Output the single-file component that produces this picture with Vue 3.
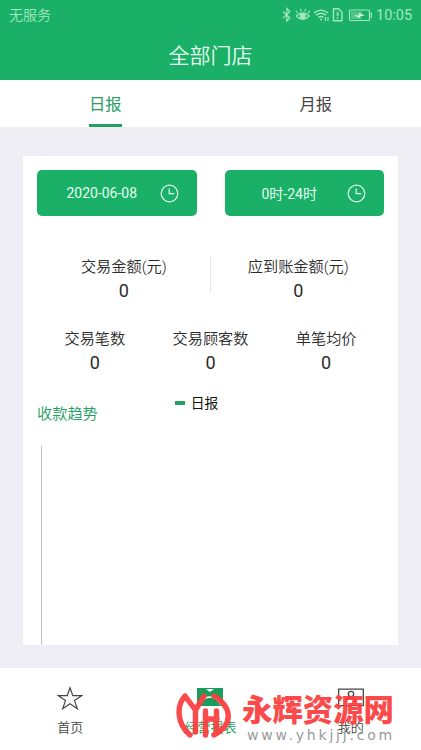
<script setup>
const tabs = ['日报', '月报']
const filters = ['2020-06-08', '0时-24时']
const totals = [
  { label: '交易金额(元)', value: 0 },
  { label: '应到账金额(元)', value: 0 },
]
const counts = [
  { label: '交易笔数', value: 0 },
  { label: '交易顾客数', value: 0 },
  { label: '单笔均价', value: 0 },
]
</script>

<template>
  <div class="screen">
    <header>
      <div class="status">
        <span>无服务</span>
        <div class="status-right">
          <svg class="indicators" width="90" height="16" viewBox="0 0 90 16" fill="none" stroke="currentColor" stroke-width="1.2">
            <path d="M1 4.5 8 11 4.8 14V1.5L8 4.5 1 11" />
            <path d="M14.2 9Q20.7 2.8 27.2 9 20.7 15.8 14.2 9M15.5 6 13.8 3.8M19 4.3 18.5 1.8M23 4.3 23.6 1.8M26 6 27.8 3.8" />
            <circle cx="20.7" cy="9" r="2.5" fill="currentColor" />
            <path d="M32 6Q39 .2 46 6M34 8.3Q39 4.2 44 8.3M36.3 10.5Q39 8.4 41.5 10.5" stroke-width="1.4" />
            <circle cx="39" cy="12.5" r="1" fill="currentColor" stroke="none" />
            <path d="M43.5 10v4M46 10v4" />
            <path d="M51.5 1.8h5l3.5 3.5v8.4h-8.5z" stroke-width="1.4" />
            <path d="M55.6 4.8v4.4M55.6 10.5V12" stroke-width="1.6" />
            <rect x="67.5" y="3" width="20" height="10.5" rx="1" />
            <rect x="69" y="4.5" width="11" height="7.5" fill="currentColor" stroke="none" opacity=".4" />
            <path d="m72 8.2 5 .2V6l6 2.6-5 .3v2.4z" fill="#d8ffe8" stroke="none" />
            <path d="M89.3 5.5v5.5" />
          </svg>
          <span class="time">10:05</span>
        </div>
      </div>
      <h1>全部门店</h1>
    </header>

    <nav class="tabs">
      <div v-for="(tab, i) in tabs" :key="tab" class="tab">
        <span :class="{ active: i === 0 }">{{ tab }}</span>
      </div>
    </nav>

    <main>
      <section class="card">
        <div class="filters">
          <button v-for="filter in filters" :key="filter">
            <span>{{ filter }}</span>
            <svg width="19" height="19" viewBox="0 0 19 19" fill="none" stroke="currentColor" stroke-width="1.2">
              <circle cx="9.5" cy="9.5" r="8.3" />
              <path d="M9.2 4.5v5.2h5" />
            </svg>
          </button>
        </div>

        <div class="totals">
          <div v-for="item in totals" :key="item.label" class="stat">
            <span>{{ item.label }}</span>
            <b>{{ item.value }}</b>
          </div>
        </div>

        <div class="counts">
          <div v-for="item in counts" :key="item.label" class="stat">
            <span>{{ item.label }}</span>
            <b>{{ item.value }}</b>
          </div>
        </div>

        <div class="chart-head">
          <h2>收款趋势</h2>
          <div class="legend"><i></i><span>日报</span></div>
        </div>
        <div class="chart"></div>
      </section>
    </main>

    <footer>
      <div class="nav-item">
        <svg width="26" height="26" viewBox="0 0 26 26" fill="none" stroke="currentColor" stroke-width="1.2">
          <path d="m13 1.7 2.8 8h8.8l-7.1 4.9 2.8 8.2-7.3-5-7.3 5 2.8-8.2-7.1-4.9h8.8z" />
        </svg>
        <span>首页</span>
      </div>
      <div class="nav-item current">
        <svg width="26" height="26" viewBox="0 0 26 26">
          <path d="M0 2h26v18H0z" fill="currentColor" />
          <path d="M9 3h8l-4 3z" fill="#fff" />
          <path d="M2 19q4-8 11-8t11 8" fill="none" stroke="#fff" stroke-width="1.4" />
        </svg>
        <span>经营报表</span>
      </div>
      <div class="nav-item">
        <svg width="26" height="26" viewBox="0 0 26 26" fill="none" stroke="currentColor" stroke-width="1.3">
          <path d="M.7 3.1h24.6v16.6H.7z" />
          <circle cx="13" cy="8" r="2.7" />
          <path d="M8 17q0-5 5-5t5 5" />
        </svg>
        <span>我的</span>
      </div>
    </footer>

    <div class="watermark">
      <svg width="56" height="52" viewBox="0 0 56 52" fill="none" stroke="currentColor" stroke-width="5.4" stroke-linecap="round" stroke-linejoin="round">
        <path d="M9 7C0 17 1 35 14 46M9 7 19.5 21V43M28 7 19.5 21M29.5 22V46M29.5 30H41M40.5 22V42M38 7C56 18 58 35 38 46" />
      </svg>
      <div class="brand">
        <strong>永辉资源网</strong>
        <span>www.yhkjjj.com</span>
      </div>
    </div>
  </div>
</template>

<style>
body {
  margin: 0;
}
</style>

<style scoped>
* {
  box-sizing: border-box;
}
.screen {
  position: relative;
  display: flex;
  flex-direction: column;
  width: 421px;
  height: 750px;
  overflow: hidden;
  background: #efeef5;
  color: #2b2b2b;
  font-family: Roboto, "Noto Sans CJK SC", sans-serif;
  font-weight: 350;
}
header {
  height: 80px;
  background: #1bb067;
  color: #e9fff2;
}
.status {
  display: flex;
  justify-content: space-between;
  align-items: center;
  height: 29px;
  padding: 0 9px;
  font-size: 14px;
  color: #a0e8bf;
}
.status > span {
  margin-top: -1px;
}
.status-right {
  display: flex;
  align-items: center;
  gap: 4px;
}
.time {
  width: 36px;
  padding-top: 1px;
  font-size: 14.5px;
  font-weight: 400;
}
h1 {
  margin: 0;
  padding-top: 11px;
  font-size: 21px;
  line-height: 32px;
  font-weight: 350;
  text-align: center;
}
.tabs {
  display: flex;
  height: 47px;
  background: #fff;
}
.tab {
  flex: 1;
  display: flex;
  justify-content: center;
  font-size: 16.3px;
  color: #444;
}
.tab span {
  height: 47px;
  line-height: 49px;
  font-weight: 400;
}
.tab .active {
  color: #249e61;
  border-bottom: 3px solid #249e61;
}
main {
  flex: 1;
  padding: 29px 23px 23px;
}
.card {
  height: 489px;
  padding: 14px 14px 0;
  background: #fff;
}
.filters {
  display: flex;
  gap: 28px;
}
button {
  display: flex;
  align-items: center;
  flex: 1;
  height: 46px;
  padding: 0 18px 0 7px;
  border: 0;
  border-radius: 5px;
  background: #1bb067;
  color: #e3fff0;
  font: inherit;
  font-size: 14px;
  font-weight: 400;
}
button span {
  flex: 1;
  text-align: center;
}
.totals,
.counts {
  display: grid;
}
.totals {
  grid-template-columns: 1fr 1fr;
  margin: 40px 1px 0 -1px;
}
.counts {
  grid-template-columns: repeat(3, 1fr);
  margin-top: 24px;
}
.totals .stat + .stat {
  padding-left: 4px;
  background: linear-gradient(#e4e4e4, #e4e4e4) 0 0 / 1px 36px no-repeat;
}
.totals .stat:first-child {
  padding-left: 2px;
}
.stat {
  display: flex;
  flex-direction: column;
  align-items: center;
  height: 48px;
  font-size: 15.2px;
}
.stat span {
  line-height: 22px;
}
.stat b {
  margin-top: 1px;
  font-size: 18px;
  line-height: 24px;
  font-weight: 400;
}
.chart-head {
  display: flex;
  align-items: flex-start;
  height: 70px;
  padding-top: 16px;
}
h2 {
  margin: 11px 0 0;
  color: #249e61;
  font-size: 15.2px;
  line-height: 22px;
  font-weight: 350;
}
.legend {
  display: flex;
  align-items: center;
  gap: 6px;
  margin-left: 77px;
  color: #111;
  font-size: 13.8px;
  line-height: 22px;
  font-weight: 400;
}
.legend i {
  width: 10px;
  height: 4px;
  background: #249e61;
}
.chart {
  height: 199px;
  margin-left: 4px;
  border-left: 1px solid #c2c2c2;
}
footer {
  display: grid;
  grid-template-columns: repeat(3, 1fr);
  height: 82px;
  background: #fff;
}
.nav-item {
  display: flex;
  flex-direction: column;
  align-items: center;
  padding-top: 18px;
  color: #444;
  font-size: 13px;
  line-height: 20px;
}
.nav-item span {
  margin-top: 6px;
}
.current {
  color: #1c9c5c;
}
.watermark {
  position: absolute;
  left: 176px;
  top: 689px;
  display: flex;
  color: rgba(252, 62, 64, 0.94);
}
.brand {
  display: flex;
  flex-direction: column;
  padding-left: 10px;
}
.brand strong {
  margin-top: 2px;
  font-size: 30.4px;
  line-height: 40px;
  font-weight: 900;
  white-space: nowrap;
}
.brand span {
  margin: -5px 0 0 5px;
  color: #999;
  font: 14px/18px "DejaVu Sans", sans-serif;
  letter-spacing: 2.8px;
}
</style>
